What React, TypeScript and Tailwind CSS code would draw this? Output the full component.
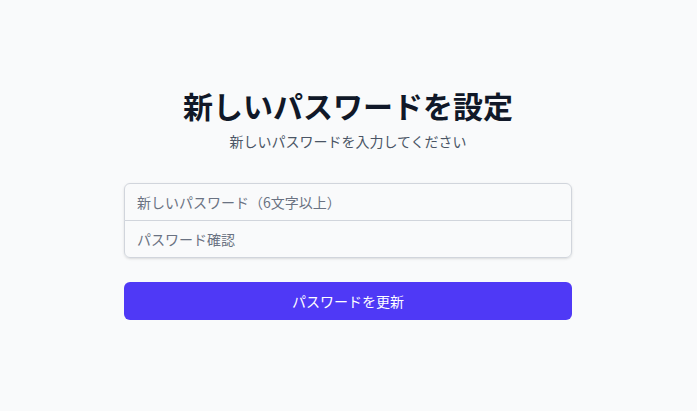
import { useState } from "react";

export default function App() {
  const [password, setPassword] = useState("");
  const [confirm, setConfirm] = useState("");

  return (
    <div
      className="min-h-screen flex items-center justify-center bg-gray-50 pl-4 pr-[17px] pb-1"
      style={{ fontFamily: '"Noto Sans CJK JP", "Noto Sans", sans-serif' }}
    >
      <div className="w-full max-w-md">
        <div>
          <h2 className="text-center text-3xl font-bold text-gray-900">新しいパスワードを設定</h2>
          <p className="mt-2 text-center text-sm text-gray-600">新しいパスワードを入力してください</p>
        </div>

        <form className="mt-8 flex flex-col gap-6" onSubmit={(e) => e.preventDefault()}>
          <div className="rounded-md shadow-sm flex flex-col -space-y-px">
            <input
              type="password"
              placeholder="新しいパスワード（6文字以上）"
              value={password}
              onChange={(e) => setPassword(e.target.value)}
              className="block w-full px-3 py-2 border border-gray-300 rounded-t-md bg-gray-50 text-sm text-gray-900 placeholder-gray-500 outline-none"
            />
            <input
              type="password"
              placeholder="パスワード確認"
              value={confirm}
              onChange={(e) => setConfirm(e.target.value)}
              className="block w-full px-3 py-2 border border-gray-300 rounded-b-md bg-gray-50 text-sm text-gray-900 placeholder-gray-500 outline-none"
            />
          </div>

          <button
            type="submit"
            className="w-full py-2 px-4 border border-transparent rounded-md bg-indigo-600 text-sm text-white hover:bg-indigo-700"
          >
            パスワードを更新
          </button>
        </form>
      </div>
    </div>
  );
}
